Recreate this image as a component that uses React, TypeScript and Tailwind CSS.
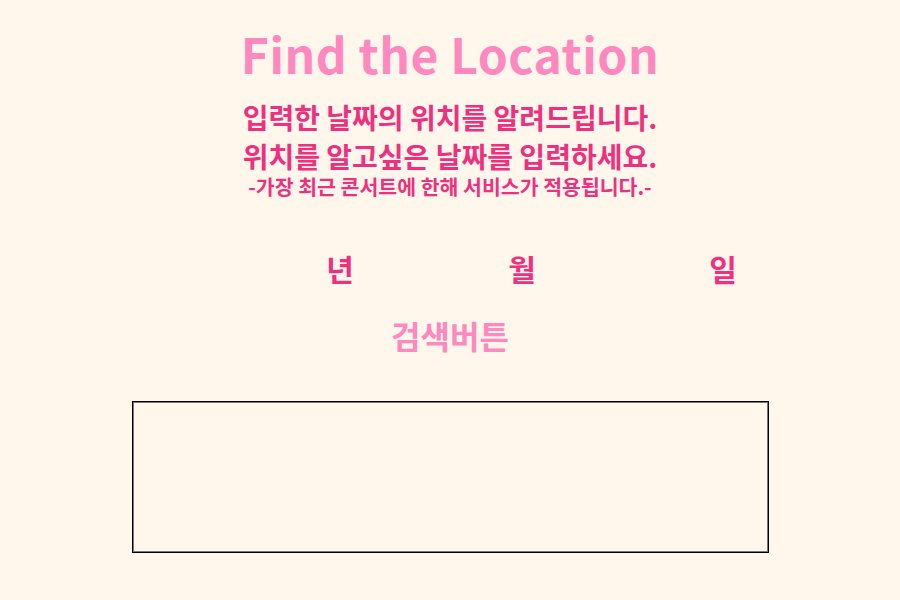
import { useState } from 'react';

const FONT = '"Noto Sans CJK KR", "Noto Sans", sans-serif';

export default function App() {
  const [year, setYear] = useState('');
  const [month, setMonth] = useState('');
  const [day, setDay] = useState('');

  return (
    <div className="min-h-screen w-full bg-[#fff7ec] flex flex-col items-center" style={{ fontFamily: FONT }}>
      <h1 className="mt-[23px] text-[48px] leading-[60px] font-bold text-[#ff88bf] tracking-[0.5px]">Find the Location</h1>

      <div className="mt-[15px] flex flex-col items-center font-bold text-[#ef307e]">
        <p className="text-[28px] leading-[39px]">입력한 날짜의 위치를 알려드립니다.</p>
        <p className="text-[28px] leading-[39px]">위치를 알고싶은 날짜를 입력하세요.</p>
        <p className="text-[20.5px] leading-[20px]">-가장 최근 콘서트에 한해 서비스가 적용됩니다.-</p>
      </div>

      {/* date inputs */}
      <div className="mt-[52px] flex items-center self-start ml-[170px] text-[30px] font-bold text-[#ef307e] leading-[40px]">
        <input
          value={year}
          onChange={(e) => setYear(e.target.value)}
          className="w-[155px] h-[30px] bg-transparent outline-none border-0"
        />
        <span className="w-[30px] text-center">년</span>
        <input
          value={month}
          onChange={(e) => setMonth(e.target.value)}
          className="w-[152px] h-[30px] bg-transparent outline-none border-0"
        />
        <span className="w-[30px] text-center">월</span>
        <input
          value={day}
          onChange={(e) => setDay(e.target.value)}
          className="w-[171px] h-[30px] bg-transparent outline-none border-0"
        />
        <span className="w-[30px] text-center">일</span>
      </div>

      <button className="mt-[27px] text-[32px] leading-[40px] font-bold text-[#ff88bf] bg-transparent">검색버튼</button>

      <div className="mt-[46px] w-[637px] h-[152px] border border-black shadow-[inset_0_0_0_1px_#777777]" />
    </div>
  );
}
